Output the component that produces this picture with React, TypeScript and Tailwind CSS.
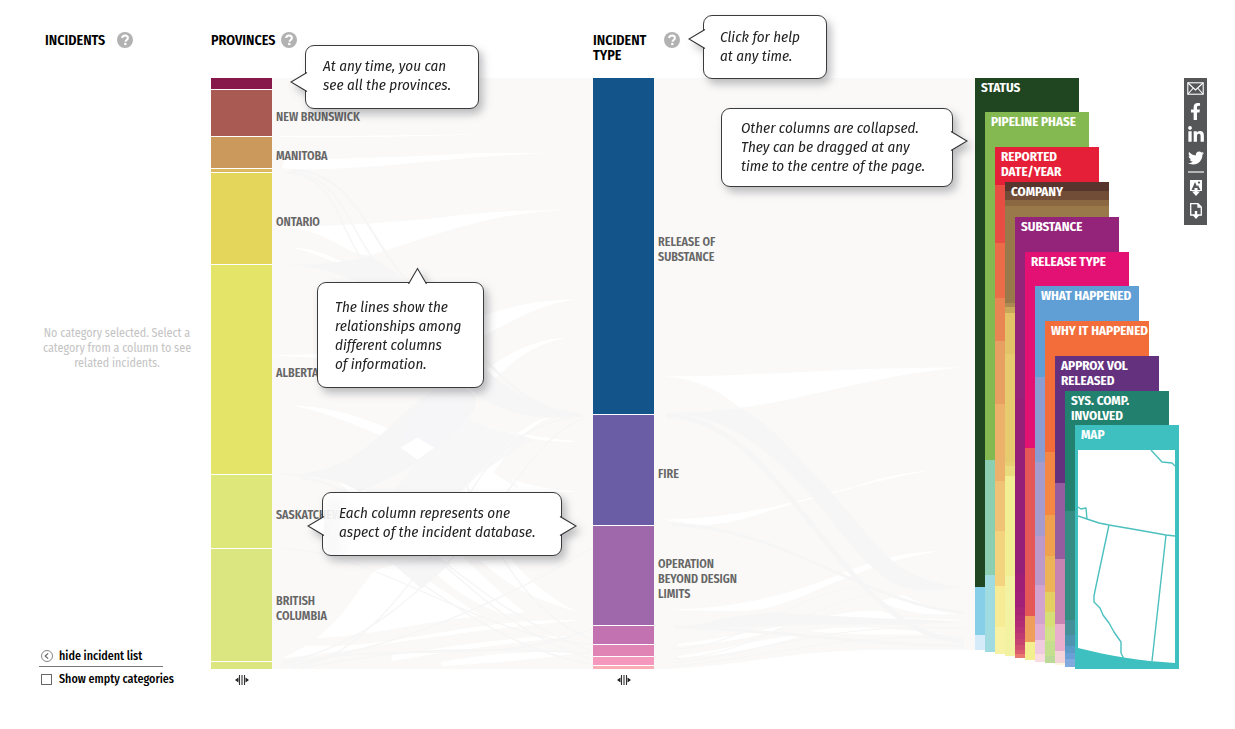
import React, { ReactNode } from "react";
import { FaFacebookF, FaLinkedinIn, FaTwitter } from "react-icons/fa";

type Segment = { size: number; color: string; label?: string[]; name?: string };

const PROVINCES: Segment[] = [
  { size: 12, color: "#86184a", name: "Quebec" },
  { size: 47, color: "#a95a52", label: ["NEW BRUNSWICK"] },
  { size: 32, color: "#ca995b", label: ["MANITOBA"] },
  { size: 4, color: "#dcb95f", name: "Nova Scotia" },
  { size: 91, color: "#e4d65a", label: ["ONTARIO"] },
  { size: 210, color: "#e4e468", label: ["ALBERTA"] },
  { size: 73, color: "#dee77a", label: ["SASKATCHEWAN"] },
  { size: 113, color: "#dbe680", label: ["BRITISH", "COLUMBIA"] },
  { size: 8, color: "#dbe680", name: "Northwest Territories" },
];

const INCIDENT_TYPES: Segment[] = [
  { size: 337, color: "#13548a", label: ["RELEASE OF", "SUBSTANCE"] },
  { size: 111, color: "#6a5da6", label: ["FIRE"] },
  { size: 100, color: "#9f68aa", label: ["OPERATION", "BEYOND DESIGN", "LIMITS"] },
  { size: 19, color: "#c272b0", name: "Explosion" },
  { size: 12, color: "#e084b5", name: "Serious injury" },
  { size: 9, color: "#f598be", name: "Adverse environmental effects" },
  { size: 4, color: "#fcacb4", name: "Fatality" },
];

type Band = [number, string];
type Collapsed = { title: string[]; top: number; bottom: number; bands: Band[] };

const COLLAPSED: Collapsed[] = [
  { title: ["STATUS"], top: 0, bottom: 19, bands: [[509, "#204521"], [48, "#87cfe8"], [15, "#d6ebf9"]] },
  { title: ["PIPELINE PHASE"], top: 34, bottom: 17, bands: [[347, "#84b951"], [115, "#8ccfb0"], [77, "#9fdbe0"]] },
  {
    title: ["REPORTED", "DATE/YEAR"], top: 69, bottom: 15,
    bands: [[38, "#e51f37"], [58, "#e74d42"], [55, "#ea6c49"], [43, "#e98553"], [62, "#e8a062"], [77, "#ecb16a"], [50, "#f0c275"], [55, "#f4d37f"], [41, "#f8eb96"], [27, "#f7f2a4"]],
  },
  {
    title: ["COMPANY"], top: 104, bottom: 13,
    bands: [[9, "#57352d"], [9, "#714d38"], [6, "#8b6841"], [97, "#99784a"], [4, "#ad8a51"], [6, "#c9a85a"], [41, "#e2c368"], [107, "#e6cb6f"], [4, "#e7d073"], [10, "#eadb7e"], [100, "#f2ee94"], [80, "#f3f2a2"]],
  },
  {
    title: ["SUBSTANCE"], top: 139, bottom: 11,
    bands: [[180, "#932479"], [175, "#961f77"], [17, "#9f1f76"], [15, "#a02177"], [8, "#a82575"], [6, "#ad2974"], [6, "#b22d74"], [6, "#b83373"], [6, "#be3a71"], [6, "#c54370"], [5, "#cf4f6e"], [4, "#db5d6d"], [4, "#ea7a70"]],
  },
  { title: ["RELEASE TYPE"], top: 174, bottom: 9, bands: [[196, "#e21173"], [167, "#e65858"], [26, "#f09e5b"], [18, "#f4f08f"]] },
  {
    title: ["WHAT HAPPENED"], top: 208, bottom: 7,
    bands: [[91, "#5f9fd6"], [85, "#8b9dd0"], [73, "#a59bcc"], [49, "#bd99c9"], [39, "#d1a3ce"], [16, "#dfaed2"], [14, "#f0cbdf"], [8, "#f9dce2"]],
  },
  {
    title: ["WHY IT HAPPENED"], top: 243, bottom: 6,
    bands: [[131, "#f26d3a"], [62, "#f58744"], [41, "#f0a14f"], [36, "#ecb457"], [20, "#e3cf62"], [15, "#d6df75"], [14, "#d2e28a"], [15, "#c4df8e"], [7, "#bbda98"]],
  },
  { title: ["APPROX VOL", "RELEASED"], top: 278, bottom: 4, bands: [[127, "#64317f"], [75, "#955c9f"], [65, "#c883b3"], [27, "#e9aecd"], [12, "#f4d4d9"], [2, "#fbf6dd"]] },
  { title: ["SYS. COMP.", "INVOLVED"], top: 313, bottom: 2, bands: [[120, "#22816e"], [108, "#358c83"], [15, "#458f98"], [11, "#4e94b0"], [7, "#5c9bc8"], [6, "#6ba0d6"], [8, "#81aadf"]] },
];

function HelpButton({ topic }: { topic: string }) {
  return (
    <button type="button" aria-label={`Help: ${topic}`} className="flex size-4 shrink-0 items-center justify-center rounded-full bg-[#b2b2b2]">
      <svg viewBox="0 0 16 16" className="size-4" aria-hidden="true">
        <path d="M5.2 6.1C5.2 4.4 6.4 3.4 8.1 3.4s2.8 1 2.8 2.5c0 2-2.4 2-2.4 3.8" fill="none" stroke="#fff" strokeWidth="2" />
        <circle cx="8.3" cy="12" r="1.3" fill="#fff" />
      </svg>
    </button>
  );
}

function CategoryColumn({ name, segments, className }: { name: string; segments: Segment[]; className: string }) {
  return (
    <div role="group" aria-label={name} className={`z-10 row-start-2 flex flex-col gap-px ${className}`}>
      {segments.map((s, i) => (
        <button
          key={i}
          type="button"
          aria-label={s.name}
          className="relative min-h-0 w-full"
          style={{ backgroundColor: s.color, flex: `${s.size - 1} 1 0px` }}
        >
          {s.label && (
            <span className="absolute inset-y-0 left-full flex flex-col justify-center pt-2 pl-1 text-left text-[12px] leading-[15px] font-semibold whitespace-nowrap text-[#666]">
              {s.label.map((line) => (
                <span key={line}>{line}</span>
              ))}
            </span>
          )}
        </button>
      ))}
    </div>
  );
}

function DragHandle({ name }: { name: string }) {
  return (
    <button type="button" aria-label={`Move ${name}`} className="mt-[5px] flex h-3 w-full cursor-grab justify-center">
      <svg viewBox="0 0 14 12" className="h-3 w-3.5" aria-hidden="true">
        <path d="M3.5 3.5v5L0 6zM10.5 3.5v5L14 6z" fill="#222" />
        <path d="M4.5 1v10M7 1v10M9.5 1v10" stroke="#333" strokeWidth="1.1" />
      </svg>
    </button>
  );
}

function Pointer({ side, className }: { side: "left" | "right" | "top"; className: string }) {
  const d =
    side === "left" ? "M17 0.5L1 10L17 19.5" : side === "right" ? "M1 0.5L17 10L1 19.5" : "M0.5 17L9.5 1.5L18.5 17";
  const size = side === "top" ? "h-[17px] w-[19px]" : "h-5 w-[18px]";
  return (
    <svg viewBox={side === "top" ? "0 0 19 17" : "0 0 18 20"} className={`absolute ${size} ${className}`} aria-hidden="true">
      <path d={d} fill="#fff" stroke="#333436" strokeWidth="1.1" />
    </svg>
  );
}

function Bubble({ className, lines, children }: { className: string; lines: string[]; children: ReactNode }) {
  return (
    <div
      role="note"
      className={`absolute z-20 rounded-[9px] border border-[#3a3b3d] text-[15px] leading-[19px] whitespace-nowrap text-[#222] italic drop-shadow-[4px_5px_4px_rgba(40,40,50,0.3)] ${className}`}
    >
      {children}
      <p className="relative">
        {lines.map((l) => (
          <span key={l} className="block">
            {l}
          </span>
        ))}
      </p>
    </div>
  );
}

const GAP = "#ffffff";
const SHADE = "#f6f6f7";
const WASH = "#faf9f8";

function ProvinceFlows() {
  return (
    <svg viewBox="0 0 322 590" preserveAspectRatio="none" className="h-0 min-h-full w-full" aria-hidden="true">
      <rect width="322" height="590" fill={WASH} />
      <g fill={GAP}>
        <path d="M9 58C90 58 150 57 226 56C150 58 90 60 9 59Z" />
        <path d="M12 82C80 80 150 78 180 76C215 74 250 75 280 75C200 77 130 88 50 91C30 91 20 91 10 90Z" />
        <path d="M10 149C80 147 130 143 165 140C210 133 250 132 298 132C220 134 170 155 99 177C70 177 60 151 10 149Z" />
        <path d="M18 169C40 170 55 176 71 184L60 183C45 176 30 171 18 169Z" />
        <path d="M150 262C190 245 240 221 307 221C262 226 235 248 190 268Z" />
        <path d="M180 320C220 285 250 262 295 259C255 268 240 284 212 312Z" />
        <path d="M0 277L60 275L60 280Z" />
        <path d="M19 327C60 328 90 338 130 356L109 357C80 345 50 332 19 327Z" />
        <path d="M129 369L146 359L163 369L146 381Z" />
        <path d="M150 320C200 350 240 355 306 363C270 364 220 355 200 342Z" />
        <path d="M190 322L205 312L197 330L182 335Z" />
        <path d="M186 414L212 389C230 370 250 345 280 338C250 352 238 372 222 394L252 413Z" />
        <path d="M60 398L96 413H78Z" />
        <path d="M240 400C260 408 290 412 309 413H250Z" />
        <path d="M102 492L130 484L215 540C160 560 60 575 10 579C60 560 80 520 102 492Z" />
        <path d="M150 478L190 477C220 505 240 525 270 545C240 542 180 520 150 478Z" />
        <path d="M210 482L240 480C255 500 280 520 306 533C270 522 235 508 210 482Z" />
        <path d="M60 565C150 545 230 540 310 541C230 548 150 560 60 572Z" />
        <path d="M120 573C180 560 250 556 310 557C250 562 180 572 120 582Z" />
        <path d="M170 583C220 573 270 572 314 573C280 578 230 584 170 587Z" />
      </g>
      <g fill={WASH}>
        <path d="M20 560C120 560 190 525 322 535V542C200 535 120 575 20 566Z" />
        <path d="M20 578C120 572 190 550 322 552V556C200 556 120 584 20 582Z" />
      </g>
      <g fill={SHADE}>
        <path d="M10 187C50 186 75 184 97 178C125 190 140 210 160 230C190 270 240 330 310 336C270 345 210 335 180 290C150 240 90 187 10 187Z" />
        <path d="M20 396C100 392 120 330 178 303C200 310 215 318 196 340C160 380 130 395 88 413C70 402 50 398 20 396Z" />
        <path d="M122 413L146 382L130 358L168 300L200 342C225 355 250 352 262 362C240 372 225 385 208 395L190 413Z" opacity="0.8" />
        <path d="M120 484L160 478L180 484L150 510Z" />
      </g>
      <path d="M129 369L146 359L163 369L146 381Z" fill={GAP} />
      <g fill="none" stroke={SHADE} strokeWidth="1.5">
        <path d="M20 92C90 92 100 180 150 215S230 330 310 336" strokeWidth="2.5" />
        <path d="M15 94C70 94 75 150 105 185S170 250 190 290" />
        <path d="M15 95C65 96 65 150 95 188" />
        <path d="M20 588C110 585 190 420 215 390S270 340 315 337" />
        <path d="M10 583C90 570 150 510 190 470S270 350 315 340" />
        <path d="M10 395C110 400 180 520 320 572" />
        <path d="M30 400C130 410 190 540 320 580" />
        <path d="M10 470C100 470 210 560 320 565" />
        <path d="M170 330C195 420 240 530 320 560" />
        <path d="M100 470C160 510 230 570 320 585" />
        <path d="M10 588C110 570 200 540 320 470" />
        <path d="M10 585C130 560 220 590 320 550" />
        <path d="M30 589C150 565 220 570 320 574" />
      </g>
    </svg>
  );
}

function IncidentFlows() {
  return (
    <svg viewBox="0 0 321 590" preserveAspectRatio="none" className="h-0 min-h-full w-full" aria-hidden="true">
      <path d="M0 0H321V571H230C130 571 90 588 10 590H0Z" fill={WASH} />
      <g fill={GAP}>
        <path d="M8 298C110 298 200 288 308 289C220 296 150 322 86 329C60 308 40 300 8 298Z" />
        <path d="M9 441C90 440 150 420 200 408C230 398 250 394 274 392C220 402 190 412 143 424C100 436 80 446 46 446Z" />
        <path d="M16 531C100 528 150 510 195 492C230 478 250 474 290 472C240 478 200 496 170 508C130 526 110 532 86 532Z" />
        <path d="M226 522L249 516C270 526 290 534 306 534C280 538 250 534 226 522Z" />
        <path d="M156 540C180 536 210 530 226 532L260 541C220 542 190 542 156 540Z" />
        <path d="M155 552C190 546 230 548 290 555C240 556 190 556 155 552Z" />
        <path d="M250 539L306 541L300 543Z" />
        <path d="M24 565C80 558 110 550 140 545C110 556 80 564 24 567Z" />
        <path d="M24 577C80 570 110 558 150 556C110 568 80 576 24 579Z" />
      </g>
      <g fill={SHADE}>
        <path d="M10 335C40 334 65 332 86 330C115 343 140 375 165 400C200 438 230 480 250 490C270 502 290 507 310 508C290 512 260 514 240 505C200 480 180 440 150 410C120 380 80 335 10 335Z" />
        <path d="M25 547C60 546 80 532 130 534C190 538 240 540 310 542C250 548 200 545 150 546C100 548 70 550 25 547Z" />
      </g>
      <g fill="none" stroke={SHADE}>
        <path d="M12 337C130 337 190 560 310 562" strokeWidth="5" />
        <path d="M18 446C130 448 210 525 310 534" strokeWidth="3" />
        <path d="M20 548C120 550 200 566 310 567" strokeWidth="3" />
        <path d="M20 570C90 568 130 520 200 508" />
        <path d="M20 580C100 576 140 532 215 516" />
        <path d="M20 584C110 575 150 545 310 549" />
        <path d="M20 587C110 580 170 555 310 558" />
      </g>
    </svg>
  );
}

function CollapsedColumn({ title, top, bottom, bands }: Collapsed) {
  return (
    <button
      type="button"
      className="-mr-[94px] grid w-[104px] shrink-0 grid-cols-1 grid-rows-1 text-left"
      style={{ marginTop: top, marginBottom: bottom }}
    >
      <span className="col-start-1 row-start-1 flex flex-col">
        {bands.map(([size, color], i) => (
          <span key={i} className="block w-full" style={{ backgroundColor: color, flex: `${size} 1 0px` }} />
        ))}
      </span>
      <CollapsedTitle lines={title} />
    </button>
  );
}

function CollapsedTitle({ lines }: { lines: string[] }) {
  return (
    <span className="col-start-1 row-start-1 block self-start pt-0.5 pl-1.5 text-[13px] leading-[15px] font-bold whitespace-nowrap text-white">
      {lines.map((l) => (
        <span key={l} className="block">
          {l}
        </span>
      ))}
    </span>
  );
}

function MapColumn() {
  return (
    <button type="button" className="flex w-[104px] shrink-0 flex-col bg-[#3dc0bf] text-left" style={{ marginTop: 347 }}>
      <span className="block h-[25px]">
        <CollapsedTitle lines={["MAP"]} />
      </span>
      <svg viewBox="0 0 97 219" preserveAspectRatio="none" className="mr-1 ml-[3px] min-h-0 w-[97px] flex-1" aria-hidden="true">
        <path d="M0 0H97V213C62 211 32 206 0 198Z" fill="#fff" />
        <g fill="none" stroke="#4cc0bf" strokeWidth="1.4" strokeLinejoin="round">
          <path d="M73 0L84 12L94 13L97 16" />
          <path d="M0 57L3 59L8 58L9 69" />
          <path d="M0 66L9 69L21 73L31 75L60 80L88 85L97 86" />
          <path d="M31 75L18 136L16 146V152L22 158L25 165L31 173L36 182L43 192V203L46 209" />
          <path d="M88 85L74 211" />
        </g>
      </svg>
    </button>
  );
}

function ShareBar() {
  const item = "flex h-[23px] w-full items-center justify-center text-white";
  return (
    <nav aria-label="Share" className="flex h-[147px] w-[23px] flex-col items-center bg-[#555658]">
      <a href="#email" aria-label="Email" className={`${item} pb-0.5`}>
        <svg viewBox="0 0 17 13" className="h-[13px] w-[17px]" fill="none" stroke="#fff" strokeWidth="1.1" aria-hidden="true">
          <rect x="0.8" y="0.8" width="15.4" height="11.4" />
          <path d="M1 1L8.5 8L16 1M1 12L6.3 6M16 12L10.7 6" />
        </svg>
      </a>
      <a href="#facebook" aria-label="Facebook" className={`${item} pb-0.5`}>
        <FaFacebookF size={17} />
      </a>
      <a href="#linkedin" aria-label="LinkedIn" className={`${item} pb-0.5`}>
        <FaLinkedinIn size={18} />
      </a>
      <a href="#twitter" aria-label="Twitter" className={`${item} pb-0.5`}>
        <FaTwitter size={16} />
      </a>
      <hr className="my-px w-4 shrink-0 border-t-2 border-[#b5b5b7]" />
      <button type="button" aria-label="Download image" className={`${item} pt-1`}>
        <svg viewBox="0 0 12 16" className="h-4 w-3" aria-hidden="true">
          <path d="M0 0H12V11H0Z" fill="#fff" />
          <path d="M1.5 10L5 2L7 6.5L8 5L10.5 10Z" fill="#555658" />
          <circle cx="9" cy="2.6" r="1.1" fill="#555658" />
          <path d="M4.5 8H7.5V11.5H10L6 16L2 11.5H4.5Z" fill="#fff" />
        </svg>
      </button>
      <button type="button" aria-label="Download data" className={`${item} pt-1`}>
        <svg viewBox="0 0 12 16" className="h-4 w-3" aria-hidden="true">
          <path d="M0.7 0.7H8L11.3 4V12H0.7ZM8 0.7V4H11.3" fill="none" stroke="#fff" strokeWidth="1.3" />
          <path d="M4.8 8H7.2V12H9.5L6 16L2.5 12H4.8Z" fill="#fff" />
        </svg>
      </button>
    </nav>
  );
}

export default function App() {
  const heading = "text-[14px] leading-[15px] font-semibold text-black";
  return (
    <main className="grid min-h-screen grid-cols-[211px_61px_minmax(260px,1fr)_61px_minmax(280px,1fr)_204px_56px] grid-rows-[78px_minmax(480px,1fr)_61px] bg-white font-['Fira_Sans_Condensed','Open_Sans',sans-serif] text-black">
      <header className="flex items-start gap-3 pt-8 pl-[45px]">
        <h2 className={`${heading} pt-px`}>INCIDENTS</h2>
        <HelpButton topic="incidents" />
      </header>
      <header className="relative col-span-2 flex items-start gap-1.5 pt-8">
        <h2 className={`${heading} pt-px`}>PROVINCES</h2>
        <HelpButton topic="provinces" />
        <Bubble className="top-[45px] left-[94px] w-[174px] bg-white pt-[11px] pb-[13px] pl-[17px]" lines={["At any time, you can", "see all the provinces."]}>
          <Pointer side="left" className="top-[26px] -left-4" />
        </Bubble>
      </header>
      <header className="relative col-span-2 flex items-start gap-2.5 pt-8">
        <h2 className={`${heading} w-[61px] pt-px`}>INCIDENT TYPE</h2>
        <HelpButton topic="incident type" />
        <Bubble className="top-[15px] left-[110px] w-[124px] bg-white pt-3 pb-3 pl-4" lines={["Click for help", "at any time."]}>
          <Pointer side="left" className="top-[13px] -left-4" />
        </Bubble>
      </header>

      <aside className="col-start-1 row-span-2 row-start-2 flex flex-col pr-4 pb-[43px] pl-[39px]">
        <p className="flex flex-1 items-center justify-center pb-[30px] text-center text-[12px] leading-[15px] text-[#c4c4c4]">
          No category selected. Select a category from a column to see related incidents.
        </p>
        <button type="button" className="mr-8 flex items-center gap-1.5 border-b border-[#777] pb-0.5 pl-0.5 text-[12px] leading-4 font-medium">
          <svg viewBox="0 0 12 12" className="size-3" fill="none" stroke="#666" aria-hidden="true">
            <circle cx="6" cy="6" r="5.5" strokeWidth="0.8" />
            <path d="M7.2 3.4L4.2 6L7.2 8.6" strokeWidth="1.2" />
          </svg>
          hide incident list
        </button>
        <label className="mt-1 flex items-center gap-[7px] pl-0.5 text-[12px] leading-4 font-medium">
          <input type="checkbox" className="size-[11px] appearance-none border border-[#666] bg-white checked:bg-[#666]" />
          Show empty categories
        </label>
      </aside>

      <CategoryColumn name="Provinces" segments={PROVINCES} className="col-start-2" />
      <div className="relative col-start-3 row-start-2">
        <ProvinceFlows />
        <Bubble
          className="top-[204px] left-[45px] w-[167px] bg-white pt-[15px] pb-[13px] pl-[17px]"
          lines={["The lines show the", "relationships among", "different columns", "of information."]}
        >
          <Pointer side="top" className="-top-4 left-[90px]" />
        </Bubble>
        <Bubble
          className="top-[414px] left-[50px] w-[240px] bg-linear-to-r from-white/85 to-white to-12% pt-[11px] pb-[13px] pl-4"
          lines={["Each column represents one", "aspect of the incident database."]}
        >
          <Pointer side="left" className="top-[23px] -left-4" />
          <Pointer side="right" className="top-[23px] -right-4" />
        </Bubble>
      </div>
      <CategoryColumn name="Incident type" segments={INCIDENT_TYPES} className="col-start-4" />
      <div className="relative col-start-5 row-start-2">
        <IncidentFlows />
        <Bubble
          className="top-[30px] right-[22px] w-[232px] bg-white pt-2.5 pb-2.5 pl-[19px]"
          lines={["Other columns are collapsed.", "They can be dragged at any", "time to the centre of the page."]}
        >
          <Pointer side="right" className="top-[22px] -right-4" />
        </Bubble>
      </div>
      <div className="col-start-6 row-start-2 flex">
        {COLLAPSED.map((c) => (
          <CollapsedColumn key={c.title[0]} {...c} />
        ))}
        <MapColumn />
      </div>
      <div className="col-start-7 row-start-2 pl-[5px]">
        <ShareBar />
      </div>

      <div className="col-start-2 row-start-3">
        <DragHandle name="provinces" />
      </div>
      <div className="col-start-4 row-start-3">
        <DragHandle name="incident type" />
      </div>
    </main>
  );
}
